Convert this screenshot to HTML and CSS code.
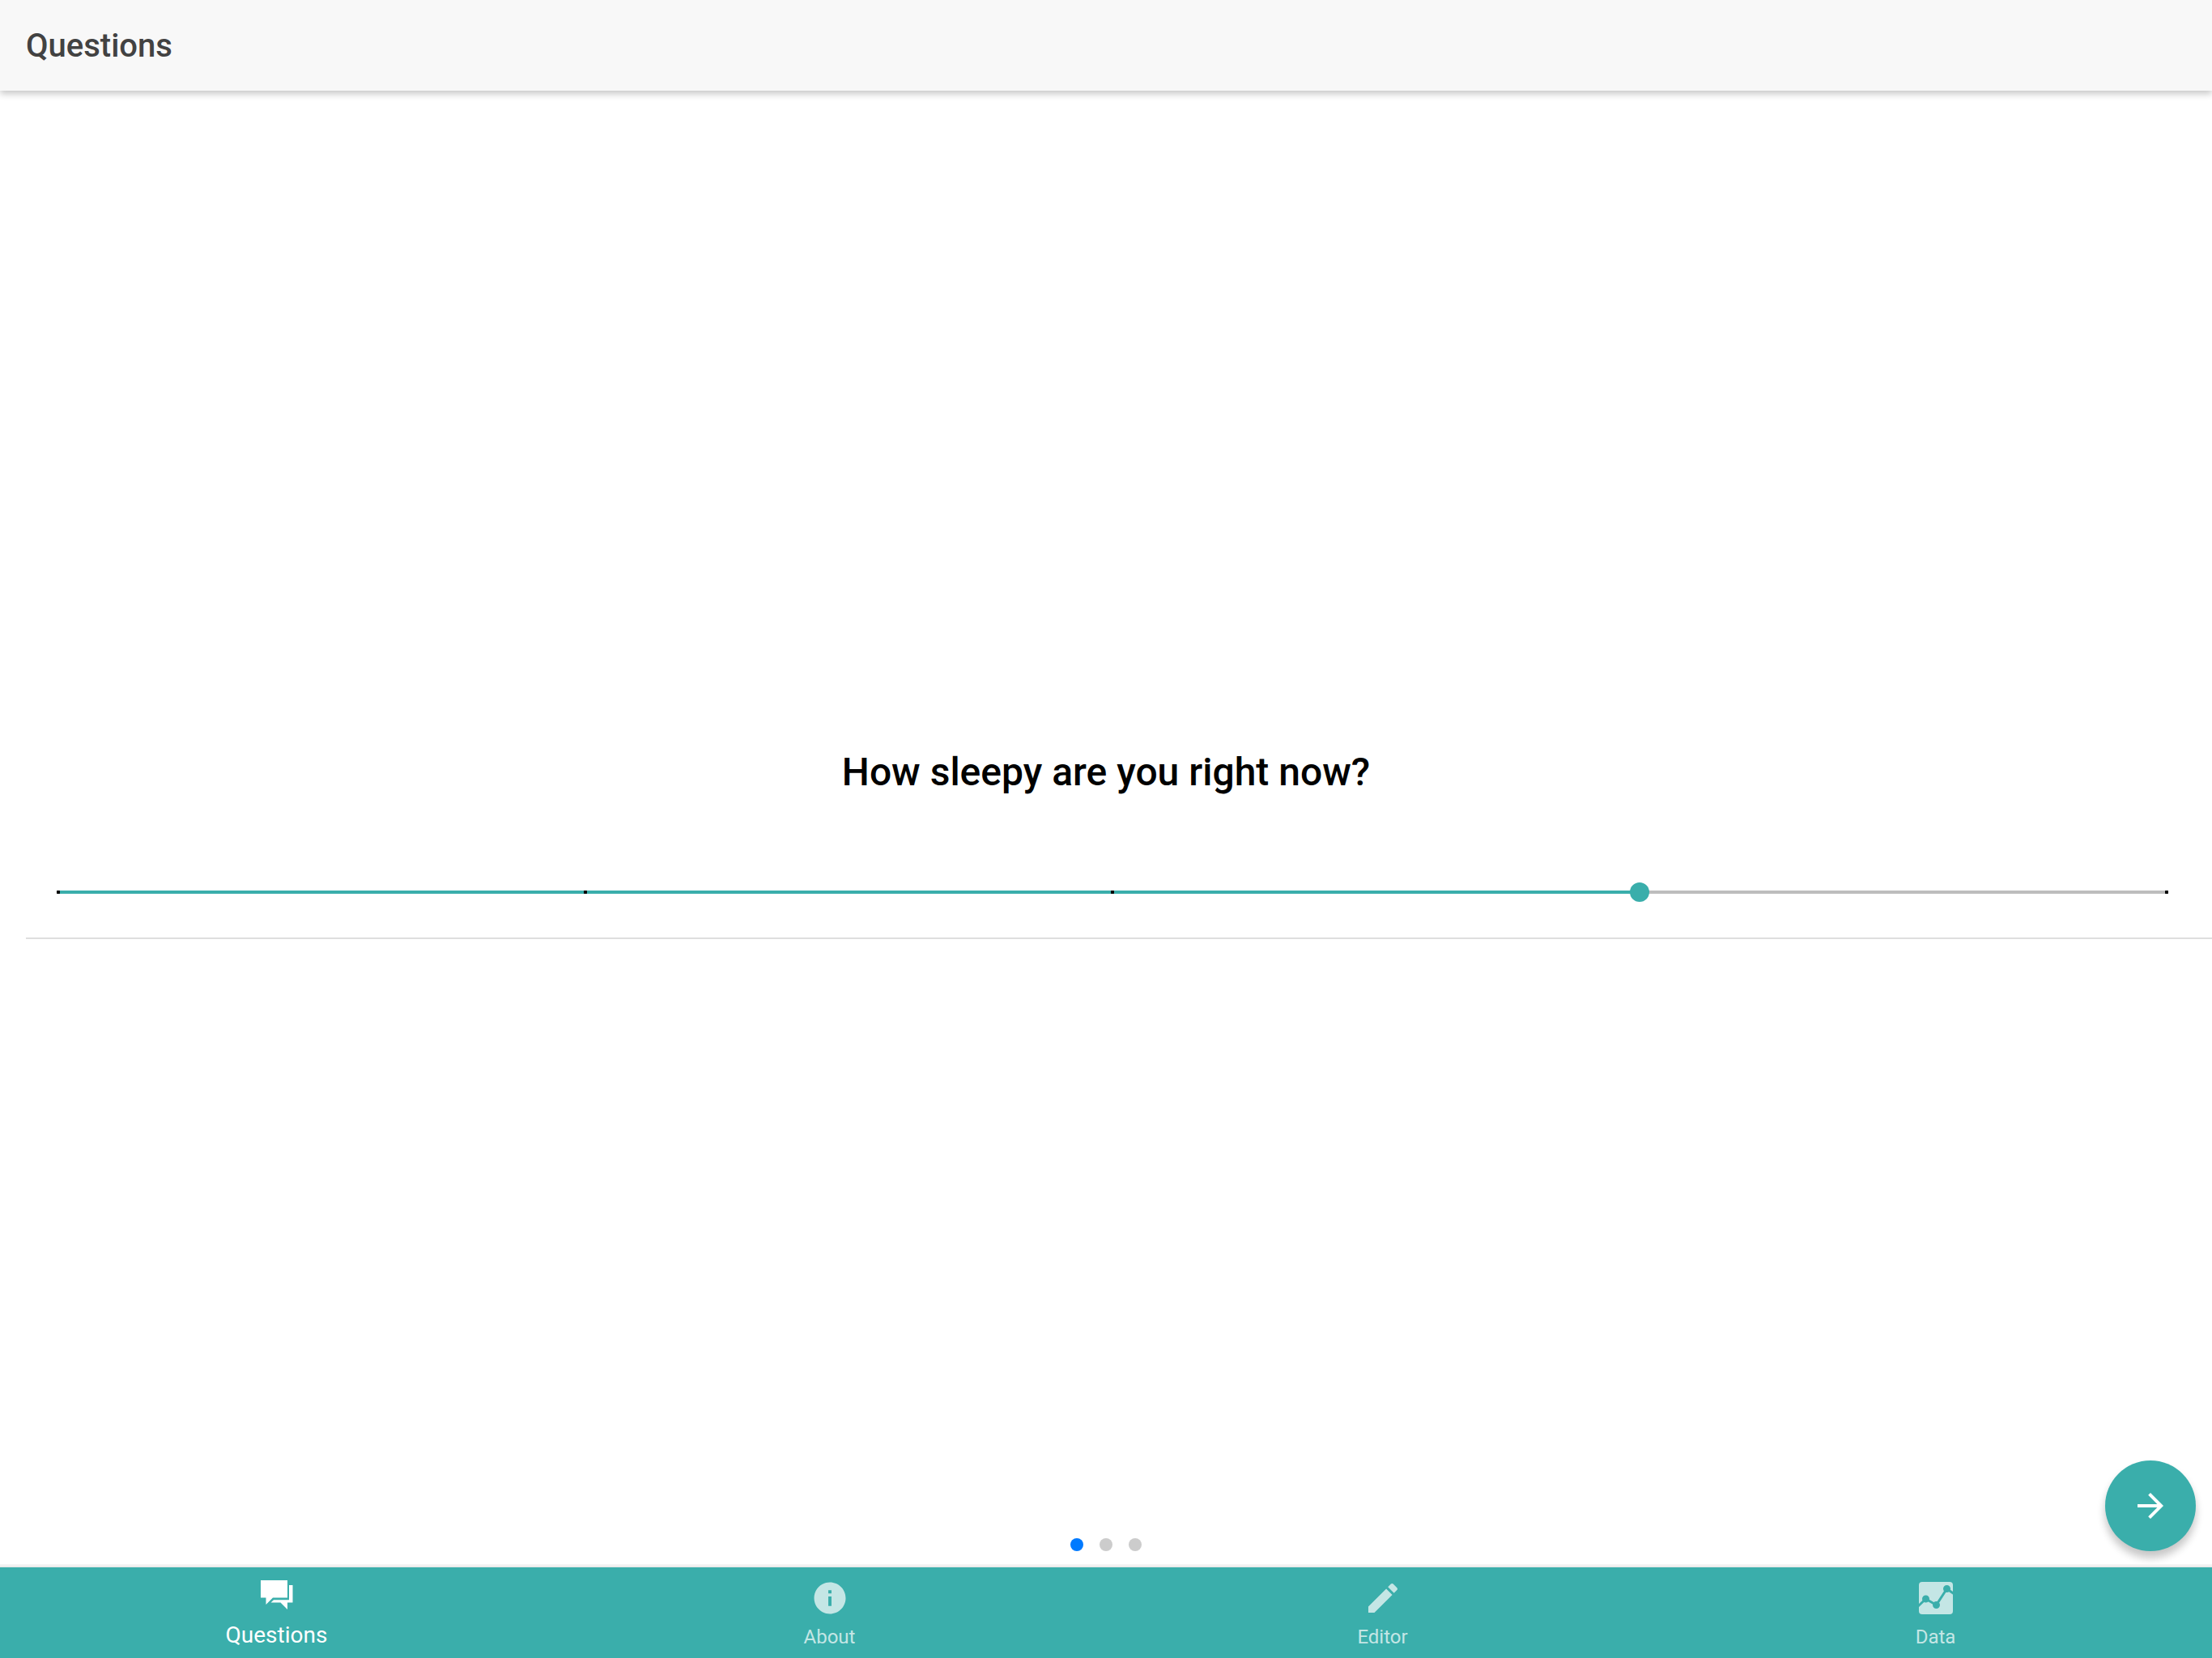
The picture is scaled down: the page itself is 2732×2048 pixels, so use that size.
FILE: index.html
```html
<!DOCTYPE html>
<html lang="en">
<head>
<meta charset="utf-8">
<meta name="viewport" content="width=device-width, initial-scale=1">
<title>Questions</title>
<link rel="stylesheet" href="styles.css">
</head>
<body>
<header class="toolbar">
  <h1 class="toolbar-title">Questions</h1>
</header>

<main class="content">
  <form class="slide">
    <label class="question" for="sleepy">How sleepy are you right now?</label>
    <div class="item">
      <input class="range" id="sleepy" type="range" min="0" max="4" step="1" value="3">
    </div>
  </form>
  <div class="pager">
    <button class="bullet bullet-active" type="button" aria-label="Question 1"></button>
    <button class="bullet" type="button" aria-label="Question 2"></button>
    <button class="bullet" type="button" aria-label="Question 3"></button>
  </div>
  <button class="fab" type="button" aria-label="Next question">
    <svg class="fab-icon" viewBox="0 0 24 24" aria-hidden="true"><path d="M12 4l-1.4 1.4L16.2 11H4v2h12.2l-5.6 5.6L12 20l8-8z"/></svg>
  </button>
</main>

<nav class="tabs">
  <a class="tab tab-active" href="#questions" aria-current="page">
    <svg class="tab-icon" viewBox="0 0 48 48" aria-hidden="true"><path d="M4 6H37V27.500H19L10.500 36V27.500H4zM39 12H43.500V33.500H37V42L28.500 33.500H16.500L20 30.300H39z"/></svg>
    <span class="tab-label">Questions</span>
  </a>
  <a class="tab" href="#about">
    <svg class="tab-icon" viewBox="0 0 512 512" aria-hidden="true"><path d="M256 48C141.600 48 48 141.600 48 256s93.600 208 208 208 208-93.600 208-208S370.400 48 256 48zm21 312h-42V235h42v125zm0-166h-42v-42h42v42z"/></svg>
    <span class="tab-label">About</span>
  </a>
  <a class="tab" href="#editor">
    <svg class="tab-icon" viewBox="0 0 512 512" aria-hidden="true"><path d="M64 368v80h80l235.727-235.729-79.999-79.998L64 368zm377.602-217.602c8.531-8.531 8.531-21.334 0-29.865l-50.135-50.135c-8.531-8.531-21.334-8.531-29.865 0l-39.468 39.469 79.999 79.998 39.469-39.467z"/></svg>
    <span class="tab-label">Editor</span>
  </a>
  <a class="tab" href="#data">
    <svg class="tab-icon" viewBox="0 0 48 48" aria-hidden="true">
      <rect x="3" y="4" width="42" height="40" rx="4"/>
      <g class="cutout">
        <path d="M2 34L11.500 25L24.500 32.500L37.500 12.500L46 18.500"/>
        <circle cx="11.500" cy="25" r="3"/><circle cx="24.500" cy="32.500" r="3"/><circle cx="37.500" cy="12.500" r="3"/>
      </g>
    </svg>
    <span class="tab-label">Data</span>
  </a>
</nav>
</body>
</html>
```
FILE: styles.css
```css
:root {
  --teal: #3aaeab;
  --tab-muted: #c4e6e5;
}

* {
  box-sizing: border-box;
}

body {
  display: flex;
  flex-direction: column;
  min-height: 100vh;
  margin: 0;
  background: #fff;
  color: #000;
  font-family: Roboto, "Liberation Sans", sans-serif;
}

.toolbar {
  position: relative;
  z-index: 1;
  display: flex;
  align-items: center;
  min-height: 112px;
  padding: 2px 32px 0;
  background: #f8f8f8;
  box-shadow: 0 4px 8px rgba(0, 0, 0, 0.22);
}

.toolbar-title {
  margin: 0;
  color: #424242;
  font-size: 40px;
  font-weight: 500;
  line-height: 48px;
}

.content {
  position: relative;
  flex: 1;
  display: flex;
  flex-direction: column;
  justify-content: center;
}

.slide {
  display: flex;
  flex-direction: column;
}

.question {
  padding: 38px 32px 62px;
  font-size: 48px;
  font-weight: 500;
  line-height: 56px;
  text-align: center;
}

.item {
  display: flex;
  margin-left: 32px;
  padding: 28px 44px 26px 28px;
  border-bottom: 2px solid #dedede;
}

.range {
  flex: 1;
  min-width: 0;
  height: 60px;
  margin: 0;
  appearance: none;
  background:
    radial-gradient(circle, #000 2px, transparent 3px) 10px 50% / 4px 4px,
    radial-gradient(circle, #000 2px, transparent 3px) calc(25% + 5px) 50% / 4px 4px,
    radial-gradient(circle, #000 2px, transparent 3px) 50% 50% / 4px 4px,
    radial-gradient(circle, #000 2px, transparent 3px) calc(100% - 10px) 50% / 4px 4px,
    linear-gradient(var(--teal), var(--teal)) 12px 50% / calc(75% - 18px) 4px,
    linear-gradient(#bdbdbd, #bdbdbd) 12px 50% / calc(100% - 24px) 4px;
  background-repeat: no-repeat;
}

.range::-webkit-slider-thumb {
  width: 24px;
  height: 24px;
  appearance: none;
  border-radius: 50%;
  background: var(--teal);
}

.pager {
  position: absolute;
  right: 0;
  bottom: 20px;
  left: 0;
  display: flex;
  justify-content: center;
  gap: 20px;
}

.bullet {
  width: 16px;
  height: 16px;
  padding: 0;
  border: 0;
  border-radius: 50%;
  background: #ccc;
}

.bullet-active {
  background: #007aff;
}

.fab {
  position: absolute;
  right: 20px;
  bottom: 20px;
  display: flex;
  align-items: center;
  justify-content: center;
  width: 112px;
  height: 112px;
  padding: 0;
  border: 0;
  border-radius: 50%;
  background: var(--teal);
  box-shadow: 0 8px 12px rgba(0, 0, 0, 0.14), 0 8px 10px rgba(0, 0, 0, 0.1);
}

.fab-icon {
  width: 48px;
  height: 48px;
  fill: #fff;
}

.tabs {
  position: relative;
  display: grid;
  grid-template-columns: repeat(4, 1fr);
  min-height: 112px;
  background: var(--teal);
  box-shadow: 0 -2px #ebebeb, 0 -4px #f5f5f5;
}

.tab {
  display: flex;
  flex-direction: column;
  align-items: center;
  justify-content: flex-end;
  gap: 8px;
  padding-bottom: 10px;
  color: var(--tab-muted);
  font-size: 24px;
  line-height: 32px;
  text-decoration: none;
}

.tab-active {
  gap: 10px;
  padding-bottom: 12px;
  color: #fff;
  font-size: 28px;
}

.tab-icon {
  width: 48px;
  height: 48px;
  fill: currentColor;
}

.cutout {
  fill: var(--teal);
  stroke: var(--teal);
  stroke-width: 3;
}

.cutout path {
  fill: none;
}
```
